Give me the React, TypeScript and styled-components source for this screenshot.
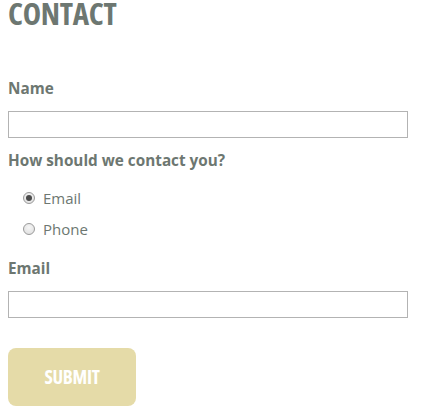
import React from "react";
import styled, { createGlobalStyle } from "styled-components";

const Global = createGlobalStyle`
  html, body { margin: 0; padding: 0; background: #fff; }
  body { font-family: "Open Sans", "Liberation Sans", sans-serif; color: #6d7771; }
  #root { padding: 0 8px; }
`;

const Form = styled.form`
  display: flex;
  flex-direction: column;
  width: 400px;
`;

const Heading = styled.h1`
  margin: 0;
  font-family: "Open Sans", "DejaVu Sans Condensed", sans-serif;
  font-stretch: 75%;
  font-weight: 700;
  font-size: 31px;
  line-height: 26px;
  letter-spacing: -0.3px;
  color: #6d7771;
`;

const Label = styled.label<{ $top: number }>`
  display: block;
  margin-top: ${(p) => p.$top}px;
  font-size: 15.3px;
  font-weight: 700;
  line-height: 20px;
  color: #6d7771;
`;

const TextInput = styled.input<{ $top?: number }>`
  box-sizing: border-box;
  display: block;
  width: 400px;
  height: 27px;
  margin: 0;
  margin-top: ${(p) => p.$top ?? 13}px;
  border: 1px solid #b3b3b3;
  background: #fff;
  padding: 2px 6px;
  font: inherit;
`;

const RadioGroup = styled.div`
  display: flex;
  flex-direction: column;
  gap: 11px;
  margin-top: 18px;
  padding-left: 15px;
`;

const RadioRow = styled.label`
  display: flex;
  align-items: center;
  gap: 8px;
  font-size: 15px;
  line-height: 20px;
  color: #6d7771;
`;

const Radio = styled.input`
  appearance: none;
  margin: 0;
  width: 12px;
  height: 12px;
  border-radius: 50%;
  border: 1px solid #9a9a9a;
  background: radial-gradient(circle at 50% 35%, #f6f6f6 0%, #dcdcdc 100%);
  box-sizing: border-box;
  position: relative;
  &:checked::after {
    content: "";
    position: absolute;
    left: 2px;
    top: 2px;
    width: 6px;
    height: 6px;
    border-radius: 50%;
    background: #4a4a4a;
  }
`;

const Submit = styled.button`
  margin-top: 30px;
  width: 128px;
  height: 58px;
  border: none;
  border-radius: 8px;
  background: #e5dba8;
  color: #fff;
  font-family: "Open Sans", "DejaVu Sans Condensed", sans-serif;
  font-stretch: 75%;
  font-weight: 700;
  font-size: 19px;
  letter-spacing: -0.3px;
  text-transform: uppercase;
  padding: 0;
`;

export default function App() {
  return (
    <>
      <Global />
      <Form onSubmit={(e) => e.preventDefault()}>
        <Heading>CONTACT</Heading>
        <Label $top={52}>Name</Label>
        <TextInput type="text" $top={13} />
        <Label $top={12}>How should we contact you?</Label>
        <RadioGroup>
          <RadioRow>
            <Radio type="radio" name="method" defaultChecked />
            Email
          </RadioRow>
          <RadioRow>
            <Radio type="radio" name="method" />
            Phone
          </RadioRow>
        </RadioGroup>
        <Label $top={19}>Email</Label>
        <TextInput type="text" $top={13} />
        <Submit type="submit">Submit</Submit>
      </Form>
    </>
  );
}
